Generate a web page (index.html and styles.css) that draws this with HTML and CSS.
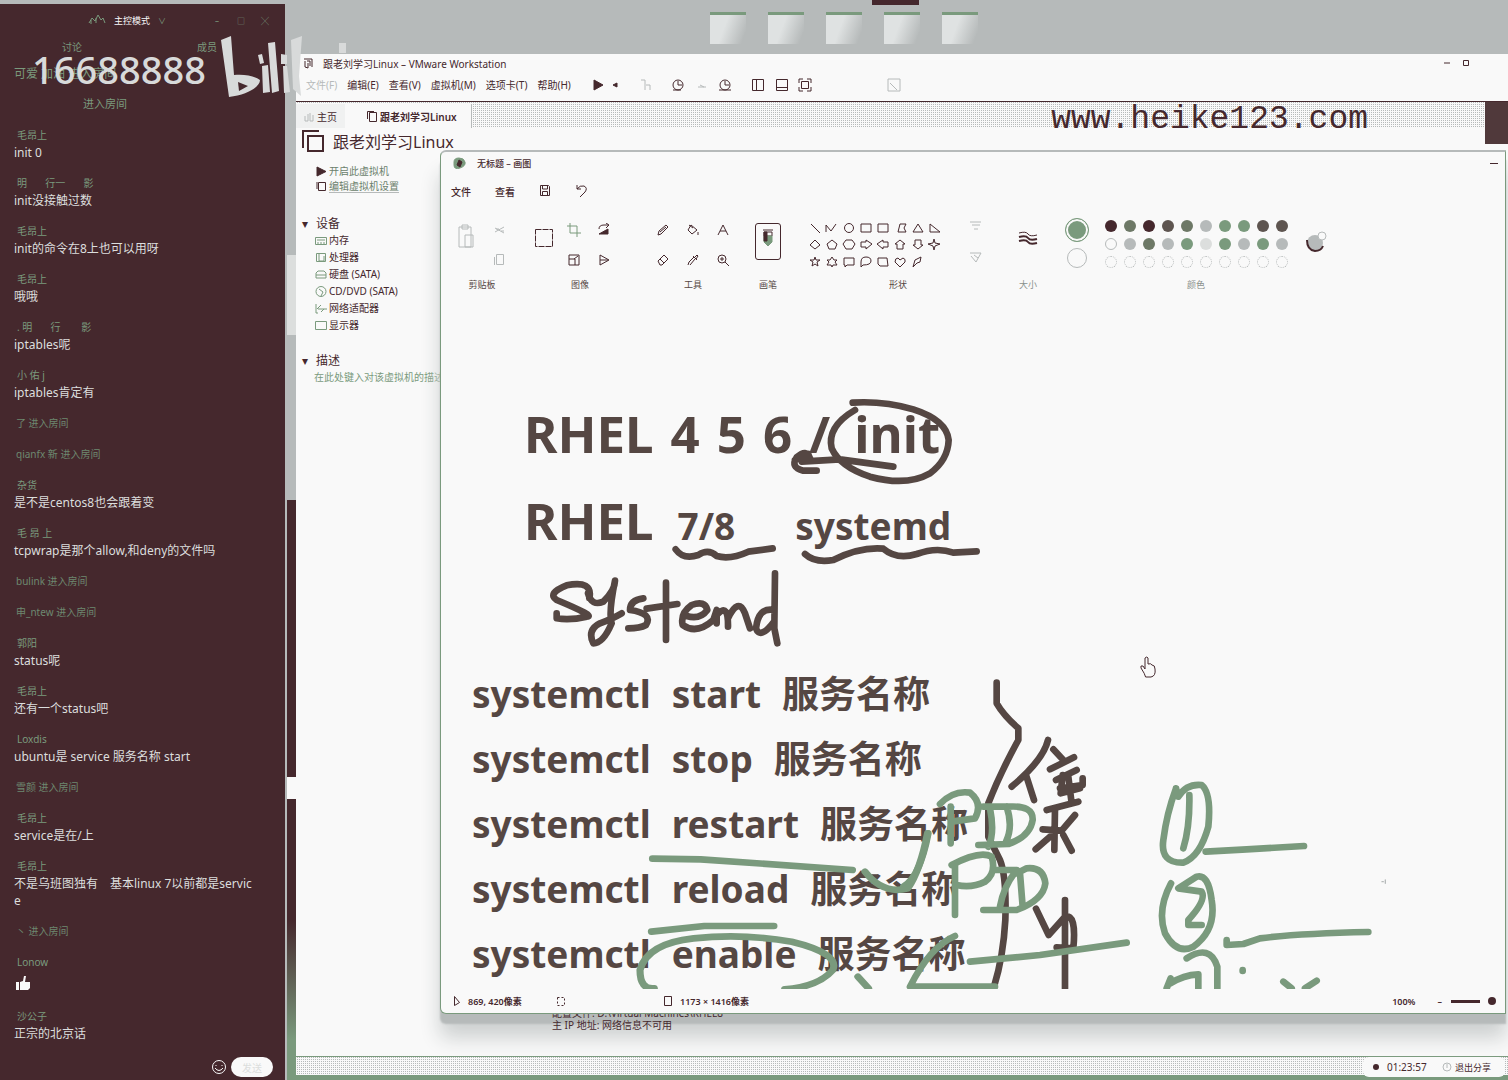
FILE: index.html
```html
<!DOCTYPE html>
<html lang="zh-CN">
<head>
<meta charset="utf-8">
<title>跟老刘学习Linux</title>
<link rel="stylesheet" href="styles.css">
</head>
<body>
<div class="screen">
  <aside class="chat">
    <header class="chat-head">
      <svg class="head-logo" width="18" height="12" viewBox="0 0 18 12"><path d="M1 9l3-5 3 3 3-6 3 5 2-2 2 5M3 6v4M8 4v5" /></svg>
      <h1>主控模式</h1>
      <span class="caret">∨</span>
      <span class="head-gap"></span>
      <button type="button" aria-label="最小化">–</button>
      <button type="button" aria-label="最大化">□</button>
      <button type="button" aria-label="关闭">╳</button>
    </header>
    <nav class="chat-tabs"><a href="#talk">讨论</a><a href="#member">成员</a></nav>
    <p class="notice">可爱 加油 进入房间</p>
    <p class="entered">进入房间</p>
    <div class="messages">
      <article><h2>毛昂上</h2><p>init 0</p></article>
      <article><h2>明 &nbsp; &nbsp; &nbsp; 行一 &nbsp; &nbsp; &nbsp; 影</h2><p>init没接触过数</p></article>
      <article><h2>毛昂上</h2><p>init的命令在8上也可以用呀</p></article>
      <article><h2>毛昂上</h2><p>哦哦</p></article>
      <article><h2>. 明 &nbsp; &nbsp; &nbsp; 行 &nbsp; &nbsp; &nbsp; &nbsp;影</h2><p>iptables呢</p></article>
      <article><h2>小 佑 j</h2><p>iptables肯定有</p></article>
      <p class="system">了 进入房间</p>
      <p class="system">qianfx 新 进入房间</p>
      <article><h2>杂货</h2><p>是不是centos8也会跟着变</p></article>
      <article><h2>毛 昂 上</h2><p>tcpwrap是那个allow,和deny的文件吗</p></article>
      <p class="system">bulink 进入房间</p>
      <p class="system">申_ntew 进入房间</p>
      <article><h2>郭阳</h2><p>status呢</p></article>
      <article><h2>毛昂上</h2><p>还有一个status吧</p></article>
      <article><h2>Loxdis</h2><p>ubuntu是 service 服务名称 start</p></article>
      <p class="system">雪颜 进入房间</p>
      <article><h2>毛昂上</h2><p>service是在/上</p></article>
      <article><h2>毛昂上</h2><p>不是乌班图独有　基本linux 7以前都是service</p></article>
      <p class="system">丶 进入房间</p>
      <article><h2>Lonow</h2>
        <svg class="thumb" width="18" height="23" viewBox="0 0 18 23"><path d="M2 11h3v8H2zM6 11l3-1 1-5h2l-1 6h5v6l-2 2H6z"/></svg>
      </article>
      <article><h2>沙公子</h2><p>正宗的北京话</p></article>
    </div>
    <footer class="chat-foot">
      <button type="button" aria-label="表情"><svg width="16" height="16" viewBox="0 0 16 16"><circle cx="8" cy="8" r="6.5"/><path d="M5 6v1M11 6v1M4 9q4 5 8 0"/></svg></button>
      <button type="button" class="send">发送</button>
    </footer>
    <div class="room-no">16688888</div>
  </aside>
  <div class="wall-strip"></div>

  <main class="desktop">
    <div class="shortcuts">
      <a href="#a" aria-label="快捷方式一"></a><a href="#b" aria-label="快捷方式二"></a><a href="#c" aria-label="快捷方式三"></a><a href="#d" aria-label="快捷方式四"></a><a href="#e" aria-label="快捷方式五"></a>
    </div>
    <div class="top-tab"></div>

    <section class="vm">
      <header class="vm-title">
        <svg width="10" height="11" viewBox="0 0 10 11"><path d="M1 1h8v8M2 3v6l3 1V5M4 3h3v5" /></svg>
        <h2>跟老刘学习Linux – VMware Workstation</h2>
        <button type="button" aria-label="最小化"><svg width="8" height="8"><path d="M1 4h6"/></svg></button>
        <button type="button" aria-label="最大化"><svg width="8" height="8"><path d="M1.500 1.500h5v5h-5z"/></svg></button>
      </header>
      <div class="vm-menu">
        <button type="button" class="faint">文件(F)</button><button type="button">编辑(E)</button><button type="button">查看(V)</button><button type="button">虚拟机(M)</button><button type="button">选项卡(T)</button><button type="button">帮助(H)</button>
        <svg class="vm-tools" width="320" height="20" viewBox="590 76 320 20">
          <path class="fill" d="M594 81l9 5-9 5z"/><path class="fill" d="M613 86l4-2v4z"/>
          <path class="pale" d="M641 81h4v10M646 86l4 0v5M698 88h8M700 86l4 2M888 80h12v12h-12zM890 84l7 7"/>
          <circle cx="678" cy="86" r="5"/><path d="M678 82v4h4M673 91h8"/>
          <circle cx="725" cy="86" r="5"/><path d="M725 82v4h4M719 91h12"/>
          <path d="M752.500 80.500h11v11h-11zM756.500 80.500v11M776.500 80.500h11v11h-11zM776.500 88.500h11M799 84v-4h4M807 80h4v4M811 88v4h-4M803 92h-4v-4M801.500 82.500h7v7h-7z"/>
        </svg>
      </div>
      <div class="vm-tabs">
        <button type="button" class="tab"><svg width="12" height="12"><path class="pale" d="M2 6v5h3V4M7 3v8h3V5"/></svg>主页</button>
        <button type="button" class="tab active"><svg width="12" height="12"><path d="M3.500 2.500h7v9h-7zM1.500 9V1.500H8"/></svg>跟老刘学习Linux</button>
      </div>
      <div class="vm-body">
        <div class="vm-side">
          <h3><svg width="22" height="22" viewBox="0 0 22 22"><path d="M6 6h15v15H6zM1 18V1h16"/></svg>跟老刘学习Linux</h3>
          <ul class="actions">
            <li><svg width="11" height="11"><path class="fill" d="M1 1l9 4.500-9 4.500z"/></svg><a href="#on">开启此虚拟机</a></li>
            <li><svg width="11" height="11"><path d="M2.500 1.500h7v8h-7zM1 8V1"/></svg><a href="#set" class="underlined">编辑虚拟机设置</a></li>
          </ul>
          <h4>设备</h4>
          <ul class="devices">
            <li><svg width="12" height="11"><path d="M.5 2.500h11v7H.5zM2 5h8M3 7v2M6 7v2M9 7v2"/></svg>内存</li>
            <li><svg width="12" height="11"><path d="M1.500 1.500h9v8h-9zM4 2v7h5V4"/></svg>处理器</li>
            <li><svg width="12" height="11"><path d="M1 8V4l2-2h6l2 2v5H1zM1 6h10"/></svg>硬盘 (SATA)</li>
            <li><svg width="12" height="11"><circle cx="6" cy="5.500" r="5"/><path d="M4 3l4 3-2 4"/></svg>CD/DVD (SATA)</li>
            <li><svg width="12" height="11"><path d="M1 1v9h2M2 6l4-4M3 6h9M6 9l3-3"/></svg>网络适配器</li>
            <li><svg width="12" height="11"><path d="M.5 1.500h11v8H.5z"/></svg>显示器</li>
          </ul>
          <h4>描述</h4>
          <p class="hint">在此处键入对该虚拟机的描述。</p>
        </div>
        <div class="vm-info">
          <p>配置文件: D:\Virtual Machines\RHEL8</p>
          <p>主 IP 地址: 网络信息不可用</p>
        </div>
      </div>
      <footer class="vm-foot"></footer>
    </section>

    <div class="site">www.heike123.com</div>
    <div class="dark-tile"></div>

    <svg class="bili" width="130" height="64" viewBox="218 36 130 64">
      <path d="M221 40l10-4 3 39c11-1 20 1 26 5 0 7-13 15-31 17z"/>
      <path class="hole" d="M238 82l10 4-9 5z"/>
      <path d="M258 55l4-1 2 9-4 1zM262 66l6-1 2 27-7 1zM268 43l7-1 4 49-7 2zM281 54l6 1v9h-6zM283 66h4l3 26-6 1zM291 40l11-4-3 40 2 20-8-7zM339 43h7v10h-7z"/>
    </svg>

    <section class="paint">
      <header class="paint-title">
        <svg width="14" height="12" viewBox="0 0 14 12"><path class="green" d="M2 5q0-4 5-4t6 4-5 6-6-3z"/><path class="fill" d="M7 3l3 2-2 5-3-2z"/></svg>
        <h2>无标题 – 画图</h2>
        <button type="button" aria-label="最小化"><svg width="10" height="6"><path d="M1 3.500h8"/></svg></button>
      </header>
      <nav class="paint-menu">
        <button type="button">文件</button><button type="button">查看</button>
        <button type="button" aria-label="保存"><svg width="12" height="14"><path d="M1.500 1.500h8l1 1v9h-9zM3.500 2v3h5V2M3.500 11V7.500h5V11"/></svg></button>
        <button type="button" aria-label="撤销"><svg width="14" height="14"><path d="M2 1v4h4M2 5q3-4 7-3 4 2 1 6l-5 5"/></svg></button>
      </nav>
      <div class="ribbon">
        <div class="group">
          <div class="tools clip">
            <svg width="18" height="26"><path class="pale" d="M2 4h12v20H2zM5 2h6v4H5zM8 12h8v12H8z"/></svg>
            <div class="stack"><svg width="14" height="14"><path class="pale" d="M2 5l9 5M2 9l9-5M3 6h3M8 8h3"/></svg><svg width="14" height="14"><path class="pale" d="M3.500 1.500h7v10h-7zM1.500 4v8"/></svg></div>
          </div><span>剪贴板</span>
        </div>
        <div class="group">
          <div class="tools image">
            <svg width="20" height="20"><path stroke-dasharray="6 1" d="M1.500 1.500h17v17h-17z"/></svg>
            <div class="quad">
              <svg width="14" height="14"><path class="mid" d="M3 0v10h11M0 3h10v11"/></svg><svg width="14" height="14"><path d="M2 6q0-4 5-4h4M9 0l3 2-3 3"/><path class="fill" d="M2 11l9-5v5z"/></svg>
              <svg width="14" height="14"><path d="M2 2h10v10H2zM2 6h6v6M7 6l4-3"/></svg><svg width="14" height="14"><path d="M3 2l9 5-9 5zM3 7h8"/></svg>
            </div>
          </div><span>图像</span>
        </div>
        <div class="group">
          <div class="tools three">
            <svg width="14" height="14"><path d="M2 12l1-4 7-6 2 2-7 7zM4 9l6-5"/></svg>
            <svg width="14" height="14"><path d="M5 2l6 5-5 4-4-4zM3 2l4 3M12 9v3"/></svg>
            <svg width="14" height="14"><path d="M2 12L7 2l5 10M4 8h6"/></svg>
            <svg width="14" height="14"><path d="M2 8l6-6 4 4-6 6H4zM4 6l4 4"/></svg>
            <svg width="14" height="14"><path d="M2 12l1-3 5-5M4 12l5-6M7 3l4 4M9 4l2-2 1 1-2 3"/></svg>
            <svg width="14" height="14"><circle cx="6" cy="6" r="4"/><path d="M9 9l4 4M4 6h4M6 4v4"/></svg>
          </div><span>工具</span>
        </div>
        <div class="group">
          <div class="tools"><button type="button" class="brush" aria-label="画笔"><svg width="14" height="24"><path d="M2 2h10M3 4h8v4H3z"/><path class="green" d="M3 8h8v6l-4 4-4-4z"/><path class="fill" d="M3 4h3v9H3z"/></svg></button></div><span>画笔</span>
        </div>
        <div class="group">
          <div class="tools shapes">
            <svg width="136" height="50" viewBox="806 220 136 50">
              <path d="M811 224l9 9M826 232v-7l5 6 5-7M861 224h10v8h-10zM878 224h10v8h-10zM898 232l2-8h6l-2 4 2 4zM913 232l5-8 5 8zM930 224v8h10z"/>
              <circle cx="849" cy="228" r="4.500"/>
              <path d="M815 240l5 5-5 4-5-4zM832 240l5 4-2 5h-6l-2-5zM846 240h6l3 4-3 5h-6l-3-5zM861 242h5v-2l6 4-6 5v-2h-5zM888 242h-5v-2l-6 4 6 5v-2h5zM900 240l5 4h-2v5h-6v-5h-2zM918 249l5-4h-2v-5h-6v5h-2zM934 239l1 4 5 1-5 2-1 4-1-4-5-2 5-1z"/>
              <path d="M815 257l1 3h4l-3 2 1 4-3-2-3 2 1-4-3-2h4zM832 257l2 3h3l-2 2 2 3h-4l-1 2-1-2h-4l2-3-2-2h3zM844 258h10v7h-7l-2 2v-2h-1zM861 262q0-5 5-5t5 4-8 4l-2 2zM878 258h9l1 8h-8l-2-2zM900 267l-5-5q0-4 3-4l2 2 3-2q3 1 2 4zM913 267l2-7 6-3-1 5-3 1z"/>
            </svg>
            <div class="stack"><svg width="16" height="14"><path class="pale" d="M2 2h11M4 5h8M6 9h4"/></svg><svg width="16" height="14"><path class="pale" d="M2 3h11l-5 9-5-6M6 5l4 3"/></svg></div>
          </div><span>形状</span>
        </div>
        <div class="group">
          <div class="tools weight"><svg width="20" height="18"><path d="M1 3q7-2 9 1t9 1"/><path class="thick" d="M1 7q7-2 9 1t9 1M1 11q7-2 9 1t9 1"/></svg></div><span class="dim">大小</span>
        </div>
        <div class="group">
          <div class="tools colors">
            <div class="picked"><i class="one"></i><i class="two"></i></div>
            <div class="swatches">
              <i class="k"></i><i class="m"></i><i class="k"></i><i class="n"></i><i class="m"></i><i class="g"></i><i class="v"></i><i class="v"></i><i class="n"></i><i class="n"></i>
              <i class="w"></i><i class="g"></i><i class="m"></i><i class="g"></i><i class="v"></i><i class="l"></i><i class="v"></i><i class="g"></i><i class="v"></i><i class="g"></i>
              <i class="e"></i><i class="e"></i><i class="e"></i><i class="e"></i><i class="e"></i><i class="e"></i><i class="e"></i><i class="e"></i><i class="e"></i><i class="e"></i>
            </div>
            <svg width="24" height="24"><circle class="gray" cx="11" cy="13" r="8"/><path class="thick" d="M3 10q0 10 8 11 6 0 8-5"/><circle class="white" cx="18" cy="6" r="4"/></svg>
          </div><span class="dim">颜色</span>
        </div>
      </div>

      <div class="canvas">
        <div class="line big"><span class="versions"><span>RHEL</span><span>4</span><span>5</span><span>6</span><span>/</span></span><span>init</span></div>
        <div class="line big"><span>RHEL</span><span class="small">7/8</span><span class="small sysd">systemd</span></div>
        <div class="commands">
          <div class="line"><span>systemctl</span><span>start</span><span>服务名称</span></div>
          <div class="line"><span>systemctl</span><span>stop</span><span>服务名称</span></div>
          <div class="line"><span>systemctl</span><span>restart</span><span>服务名称</span></div>
          <div class="line"><span>systemctl</span><span>reload</span><span>服务名称</span></div>
          <div class="line"><span>systemctl</span><span>enable</span><span>服务名称</span></div>
        </div>
        <svg class="ink" width="1064" height="689" viewBox="441 300 1064 689">
          <g transform="translate(500 380) scale(.33333)">
            <path d="M1058 68Q1150 62 1240 88Q1340 120 1346 180Q1344 240 1290 280Q1220 320 1110 290Q1020 260 995 205Q980 140 1065 90M905 245L1020 238L1180 260M930 235Q920 205 890 232Q870 262 910 272L950 272M885 240L925 222"/>
            <path d="M527 508Q550 540 595 525Q625 505 650 528Q690 540 745 515L818 505M915 522Q945 550 1000 540Q1080 500 1150 506Q1190 540 1250 522Q1310 500 1360 518L1430 514"/>
            <path d="M268 655Q280 600 200 616Q140 640 170 660Q290 710 260 710Q210 722 170 715V700M264 640Q275 680 310 665Q345 630 345 602Q325 700 335 730Q310 790 280 790Q260 750 300 730Q340 715 365 700M430 655Q390 660 390 690Q460 700 438 735Q420 745 385 745M498 608V780M440 686L532 672M560 708Q600 720 622 690Q615 660 575 675Q540 700 548 735Q590 765 640 720L650 690V730M655 700Q685 670 684 740M684 715Q715 650 735 700L750 745M825 580L823 745L832 790M823 690Q775 680 768 745Q780 780 822 725"/>
          </g>
          <g transform="translate(900 660) scale(.33333)">
            <path d="M290 68V130Q310 165 355 205V240Q300 340 265 430V530L300 600Q320 650 316 780Q310 890 282 980M444 240Q430 300 335 380M378 345L402 420M460 268L490 300M450 328L522 292M468 360L530 330M488 345L482 400L540 385M505 350L515 430M548 355V375L480 385M440 450L535 425M465 445L463 570M428 508L485 512L525 465M407 568L450 530M490 525L515 572M408 746L446 825L495 770V720V985M495 770Q530 760 520 865L470 862"/>
            <g class="green-ink">
              <path d="M120 432Q160 390 210 398Q250 430 225 475L155 485M152 440V550M250 440H320M270 445Q285 520 265 560M320 440Q340 500 318 545M235 555L325 552Q390 530 398 480Q400 435 325 440M155 615Q240 570 275 590Q290 640 255 665Q215 685 170 675M165 615V765M280 630H350Q310 680 300 740M250 750H350Q430 720 436 670Q430 620 380 625L350 640M360 640L368 740"/>
              <path d="M828 385L835 410Q860 370 905 375Q935 400 925 500Q900 590 850 608Q780 610 790 540Q800 460 828 385M868 405Q870 500 850 565M917 575L1040 568L1212 558M813 670Q770 750 795 820Q830 885 880 860Q950 810 935 720Q925 640 890 650L835 685L905 695Q920 720 865 780V795H905M980 840V855L1030 852L1080 835Q1200 820 1405 816M860 895Q930 850 952 920V985M800 985L812 955V970Q850 945 895 943V985M1150 965L1175 985M1215 985L1250 962"/>
              <path d="M1028 930v3"/>
              <path d="M210 905L420 885L680 848M85 520Q60 650 10 680M165 828Q90 860 30 980H285"/>
              <path class="pale" d="M1446 665h4M1456 660v10"/>
            </g>
          </g>
          <g class="green-ink" transform="translate(440 780) scale(.35714 .33333)">
            <path d="M595 236L730 238L1155 270M1190 275Q1240 345 1310 325Q1345 270 1365 160M592 455L740 438H935M600 625Q560 630 560 570Q580 490 710 475Q850 460 985 485Q1120 520 1100 570Q1060 620 965 628M1170 590L1200 625"/>
          </g>
          <g class="hand"><path d="M1144 673l-3-5q-1-3 2-2l2 3v-11q2-2 3 0v6q3-1 4 1 3 0 3 4 1 7-4 8h-5z"/></g>
        </svg>
      </div>
      <footer class="paint-foot">
        <span class="pos"><svg width="8" height="12"><path d="M1.500 1.500l5 6-5 3z"/></svg>869, 420像素</span>
        <span class="sel"><svg width="10" height="12"><path stroke-dasharray="2 2" d="M1.500 2.500h7v8h-7z"/></svg></span>
        <span class="size"><svg width="8" height="12"><path d="M.5 1.500h7v9h-7z"/></svg>1173 × 1416像素</span>
        <label for="zoom">100%</label><span class="minus">–</span><input id="zoom" type="range" min="0" max="100" value="80">
      </footer>
    </section>

    <div class="share"><i></i><time>01:23:57</time><button type="button"><svg width="10" height="10"><circle cx="5" cy="5" r="4"/><path d="M5 2v4"/></svg>退出分享</button></div>
  </main>
</div>
</body>
</html>
```
FILE: styles.css
```css
:root {
  --dark: #45282d;
  --green: #7a9a7d;
  --gray: #b6baba;
  --paper: #f9f9f9;
  --ink: #554743;
  --dither: conic-gradient(#b6baba 25%, #f9f9f9 0) 0 0 / 2px 2px;
}
* { box-sizing: border-box; }
body, h1, h2, h3, h4, p, ul { margin: 0; padding: 0; font-weight: 400; }
body {
  font-family: "Noto Sans", "Noto Sans CJK SC", sans-serif;
  font-size: 10px;
  color: var(--dark);
  background: var(--gray);
}
li { list-style: none; }
a { color: inherit; text-decoration: none; }
button { border: 0; padding: 0; background: none; font: inherit; color: inherit; }
svg { flex: none; fill: none; stroke: var(--dark); }
.fill { fill: var(--dark); }
.green { fill: var(--green); stroke: var(--green); }
.gray { fill: var(--gray); stroke: none; }
.white { fill: var(--paper); stroke: var(--gray); }
.pale { stroke: var(--gray); }
.mid { stroke: var(--green); }
.thick { stroke-width: 2; }

.screen { display: flex; height: 100vh; overflow: hidden; }

/* chat column */
.chat {
  position: relative;
  flex: none;
  display: flex;
  flex-direction: column;
  width: 285px;
  background: var(--dark);
  border-top: 4px solid var(--gray);
  color: var(--paper);
}
.chat-head { display: flex; align-items: center; gap: 8px; height: 32px; padding: 0 12px 0 88px; }
.chat-head h1 { font-size: 9px; }
.chat-head svg { stroke: var(--green); }
.chat-head button, .caret { color: var(--green); font-size: 8px; width: 16px; }
.head-gap { flex: 1; }
.chat-tabs { display: flex; justify-content: space-between; padding: 4px 68px 0 62px; color: var(--green); line-height: 14px; }
.notice { margin-top: 10px; padding-left: 14px; line-height: 20px; font-size: 12px; color: var(--green); }
.entered { padding: 11px 0 0 83px; font-size: 11px; line-height: 18px; color: var(--green); }
.messages { flex: 1; display: flex; flex-direction: column; gap: 14px; padding: 14px 28px 0 14px; }
.messages h2 { padding-left: 3px; font-size: 10px; line-height: 17px; color: var(--green); }
.messages article p { font-size: 12px; line-height: 17px; color: #dcdedd; word-break: break-all; }
.messages .system { padding-left: 2px; font-size: 10px; line-height: 17px; color: #6d8970; }
.thumb { display: block; fill: var(--paper); stroke: none; }
.chat-foot { display: flex; justify-content: flex-end; align-items: center; gap: 4px; padding: 0 12px 3px; }
.chat-foot svg { display: block; stroke: var(--paper); }
.send { width: 42px; height: 20px; border-radius: 10px; background: var(--paper); color: #dcdedd; }
.room-no {
  position: absolute;
  left: 32px;
  top: 51px;
  font-size: 38px;
  line-height: 28px;
  font-weight: 500;
  color: #d8dada;
}
.wall-strip {
  flex: none;
  width: 11px;
  border-left: 2px solid var(--gray);
  background: linear-gradient(var(--gray) 255px, #dcdedd 255px 335px, var(--gray) 335px 500px, var(--dark) 500px 777px, var(--paper) 777px 799px, var(--dark) 799px 920px, var(--green) 1040px);
}

/* desktop */
.desktop { position: relative; flex: 1; min-width: 0; background: var(--gray); }
.shortcuts { display: flex; gap: 22px; padding: 12px 0 0 414px; }
.shortcuts a {
  width: 36px;
  height: 38px;
  border-top: 3px solid var(--green);
  border-bottom: 6px solid var(--gray);
  background: linear-gradient(110deg, #dfe2e2 40%, var(--gray) 90%);
}
.top-tab { position: absolute; left: 576px; top: 0; width: 47px; height: 5px; background: var(--dark); }

.vm {
  position: absolute;
  inset: 54px 0 0 0;
  display: flex;
  flex-direction: column;
  background: var(--paper);
  border-bottom: 5px solid var(--green);
}
.vm-title { display: flex; align-items: center; height: 18px; padding: 0 38px 0 7px; }
.vm-title h2 { flex: 1; padding-left: 10px; font-size: 10px; }
.vm-title button + button { margin-left: 11px; }
.vm-title button, .paint-title button { display: flex; }
.vm-menu { display: flex; align-items: center; gap: 10px; height: 30px; padding: 0 0 4px 10px; border-bottom: 1px solid var(--dark); }
.vm-menu .faint { color: var(--gray); }
.vm-tools { margin-left: 9px; }
.vm-tabs { display: flex; height: 26px; padding-top: 2px; background: var(--dither); }
.tab { display: flex; align-items: center; gap: 2px; padding: 0 8px 0 7px; background: #f0f1f1; }
.tab.active { padding: 0 14px 0 21px; background: var(--paper); font-weight: 600; border-right: 1px solid var(--gray); }
.vm-body { flex: 1; display: flex; min-height: 0; }
.vm-side { flex: none; width: 170px; padding-left: 6px; }
.vm-side h3 { display: flex; align-items: center; gap: 9px; height: 26px; font-size: 16px; white-space: nowrap; }
.vm-side h3 svg { stroke-width: 2; }
.actions { padding: 9px 0 0 14px; line-height: 17px; color: #6b7f6c; }
.actions li, .devices li { display: flex; align-items: center; gap: 2px; }
.actions .underlined { border-bottom: 1px solid var(--gray); line-height: 12px; }
.vm-side h4 { margin-top: 18px; font-size: 12px; line-height: 17px; }
.actions + h4 { margin-top: 22px; }
.vm-side h4::before { content: "▾"; display: inline-block; width: 14px; font-size: 12px; }
.devices { padding-left: 13px; line-height: 17px; }
.devices svg { stroke: var(--green); }
.hint { padding-left: 12px; line-height: 16px; white-space: nowrap; color: var(--green); }
.vm-info {
  position: relative;
  z-index: 1;
  display: flex;
  flex-direction: column;
  justify-content: flex-end;
  align-self: flex-end;
  height: 42px;
  padding: 0 0 25px 86px;
  overflow: hidden;
  font-weight: 500;
  line-height: 12px;
}
.vm-info p { flex: none; }
.vm-foot { height: 19px; border-top: 1px solid var(--green); background: var(--dither); }

.site {
  position: absolute;
  top: 101px;
  right: 140px;
  font-family: "Liberation Mono", monospace;
  font-size: 33px;
  line-height: 38px;
}
.dark-tile { position: absolute; top: 102px; right: 0; width: 23px; height: 42px; background: #50393b; }
.bili { position: absolute; left: -78px; top: 36px; fill: #d8dada; stroke: none; }
.bili .hole { fill: var(--dark); }

/* paint window */
.paint {
  position: absolute;
  inset: 150px 2px 66px 144px;
  display: flex;
  flex-direction: column;
  background: var(--paper);
  border: 1px solid var(--green);
  border-top: 2px solid var(--gray);
  border-radius: 6px 0 0 6px;
  box-shadow: 0 10px 2px var(--gray), 0 24px 20px #cdd0d0;
}
.paint-title { display: flex; align-items: center; height: 22px; padding: 0 6px 0 11px; }
.paint-title h2 { flex: 1; padding-left: 11px; font-size: 9px; font-weight: 500; }
.paint-menu { display: flex; align-items: center; gap: 24px; height: 34px; padding-left: 10px; font-weight: 500; }
.paint-menu svg { display: block; }
.ribbon { display: grid; grid-template-columns: 60px 112px 90px 36px 200px 36px 276px; gap: 12px; padding: 8px 0 8px 11px; }
.group { display: flex; flex-direction: column; align-items: center; color: var(--ink); }
.group span { font-size: 9px; line-height: 14px; }
.group .dim { color: #8a908c; }
.tools { display: flex; justify-content: center; width: 100%; height: 62px; padding-top: 7px; }
.stack { display: flex; flex-direction: column; gap: 16px; }
.clip { gap: 18px; }
.image { gap: 13px; padding-right: 16px; }
.image > svg { margin-top: 5px; }
.quad { display: grid; grid-template-columns: 14px 14px; gap: 16px; align-content: start; }
.three { display: grid; grid-template-columns: repeat(3, 14px); gap: 16px; align-content: start; }
.brush { width: 26px; height: 37px; border: 1px solid var(--dark); border-radius: 3px; }
.shapes { gap: 26px; padding: 4px 6px 0 0; }
.weight { padding-top: 14px; }
.colors { gap: 16px; padding-top: 2px; }
.picked { display: flex; flex-direction: column; align-items: center; gap: 6px; }
.picked i { border-radius: 50%; border: 1px solid var(--green); }
.one { width: 24px; height: 24px; background: var(--green); box-shadow: inset 0 0 0 2px var(--paper); }
.picked .two { width: 20px; height: 20px; border-color: var(--gray); }
.swatches { display: grid; grid-template-columns: repeat(10, 12px); gap: 6px 7px; align-content: start; padding-top: 2px; }
.swatches i { height: 12px; border-radius: 50%; }
.swatches + svg { margin-top: 12px; }
.k { background: var(--dark); }
.n { background: #5e5550; }
.m { background: #6d7866; }
.v { background: var(--green); }
.g { background: var(--gray); }
.l { background: #dcdedd; }
.w { border: 1px solid var(--gray); }
.e { border: 1px dotted var(--gray); }

.canvas { position: relative; flex: 1; min-height: 0; overflow: hidden; padding: 90px 0 0 31px; font-weight: 700; font-size: 37px; color: var(--ink); }
.line { display: flex; align-items: baseline; gap: 21px; line-height: 65px; white-space: nowrap; }
.big { padding-left: 52px; gap: 24px; font-size: 51px; line-height: 87px; }
.versions { display: flex; gap: 17px; }
.big .small { font-size: 37px; }
.big .sysd { padding-left: 36px; }
.commands { padding-top: 92px; }
.ink { position: absolute; left: 0; top: 0; stroke: var(--ink); stroke-width: 20; stroke-linecap: round; stroke-linejoin: round; }
.green-ink { stroke: var(--green); }
.ink .pale { stroke-width: 4; }
.hand { stroke: var(--dark); stroke-width: 1; fill: var(--paper); }

.paint-foot { display: flex; align-items: center; height: 24px; padding-left: 12px; font-size: 9px; font-weight: 600; }
.paint-foot span { display: flex; align-items: center; }
.pos { gap: 7px; width: 103px; }
.sel { width: 108px; }
.size { gap: 8px; flex: 1; }
.minus { padding: 0 9px 0 22px; }
.paint-foot input { appearance: none; width: 54px; height: 12px; margin: 0; background: linear-gradient(var(--dark), var(--dark)) 0 5px / 29px 3px no-repeat; }
.paint-foot input::-webkit-slider-thumb { appearance: none; width: 8px; height: 8px; border-radius: 50%; background: var(--dark); }

.share {
  position: absolute;
  right: 3px;
  bottom: 3px;
  display: flex;
  align-items: center;
  height: 20px;
  padding: 0 14px 0 10px;
  border-radius: 6px;
  background: var(--paper);
}
.share i { width: 6px; height: 6px; margin-right: 8px; border-radius: 50%; background: var(--dark); }
.share time { font-size: 10px; width: 55px; }
.share button { display: flex; align-items: center; gap: 3px; font-size: 9px; }
.share svg { stroke: var(--gray); }
```
